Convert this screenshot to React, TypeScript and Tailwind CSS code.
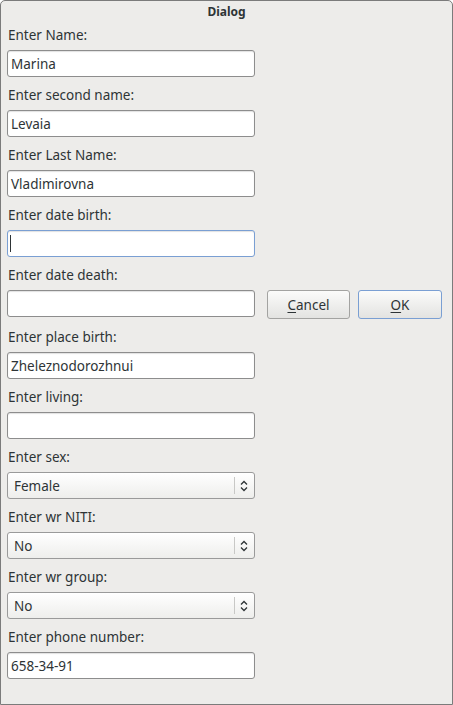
import React from "react";

const font = { fontFamily: '"Noto Sans", "DejaVu Sans", sans-serif' };

type Field = {
  label: string;
  value?: string;
  kind?: "text" | "focus" | "select";
  buttons?: boolean;
};

const fields: Field[] = [
  { label: "Enter Name:", value: "Marina" },
  { label: "Enter second name:", value: "Levaia" },
  { label: "Enter Last Name:", value: "Vladimirovna" },
  { label: "Enter date birth:", kind: "focus" },
  { label: "Enter date death:", buttons: true },
  { label: "Enter place birth:", value: "Zheleznodorozhnui" },
  { label: "Enter living:" },
  { label: "Enter sex:", value: "Female", kind: "select" },
  { label: "Enter wr NITI:", value: "No", kind: "select" },
  { label: "Enter wr group:", value: "No", kind: "select" },
  { label: "Enter phone number:", value: "658-34-91" },
];

const Entry = ({ value, focus }: { value?: string; focus?: boolean }) => (
  <div
    className={`flex h-[27px] w-[248px] items-center rounded-[3px] border bg-white px-[3px] text-[13.5px] leading-[18px] text-[#2e3436] shadow-[inset_0_1px_1px_rgba(0,0,0,0.12)] ${
      focus ? "border-[#7a9fd3]" : "border-[#8d8d8d]"
    }`}
  >
    {focus && <span className="ml-[-1px] h-[17px] w-px bg-[#2e3436]" />}
    {value}
  </div>
);

const Combo = ({ value }: { value?: string }) => (
  <div className="flex h-[27px] w-[248px] items-center rounded-[3px] border border-[#9a9a9a] bg-gradient-to-b from-white to-[#eeeeec] pl-[6px] text-[13.5px] leading-[18px] text-[#2e3436]">
    <span className="flex-1">{value}</span>
    <span className="h-[17px] w-px bg-[#c8c8c6]" />
    <svg width="18" height="14" viewBox="0 0 18 14" className="mr-[1px]">
      <path
        d="M6 5.5 L9 2.5 L12 5.5 M6 8.5 L9 11.5 L12 8.5"
        fill="none"
        stroke="#2e3436"
        strokeWidth="1.3"
      />
    </svg>
  </div>
);

const Button = ({ label, hot, def }: { label: string; hot: string; def?: boolean }) => (
  <button
    className={`h-[29px] rounded-[3px] border bg-gradient-to-b from-[#fbfbfa] to-[#e3e3e1] text-[13.5px] leading-[18px] text-[#2e3436] ${
      def ? "w-[84px] border-[#7a9fd3]" : "w-[83px] border-[#a3a3a1]"
    }`}
  >
    <span className="underline underline-offset-2">{hot}</span>
    {label.slice(hot.length)}
  </button>
);

export default function App() {
  return (
    <div
      style={font}
      className="flex h-[705px] w-[453px] flex-col overflow-hidden rounded-t-[5px] border border-[#7b7b7b] bg-[#edecea]"
    >
      <div className="flex h-[24px] items-start justify-center pt-[3px] text-[12px] leading-[15px] font-bold text-[#2e3436]">
        Dialog
      </div>
      <div className="flex flex-col px-[6px]">
        {fields.map((f) => (
          <div key={f.label} className="flex flex-col pb-[8px]">
            <div className="flex h-[20px] items-center pl-[1px] text-[13.5px] leading-[20px] text-[#2e3436]">
              {f.label}
            </div>
            <div className="mt-[5px] flex items-start">
              {f.kind === "select" ? (
                <Combo value={f.value} />
              ) : (
                <Entry value={f.value} focus={f.kind === "focus"} />
              )}
              {f.buttons && (
                <div className="ml-[12px] flex gap-[8px]">
                  <Button label="Cancel" hot="C" />
                  <Button label="OK" hot="O" def />
                </div>
              )}
            </div>
          </div>
        ))}
      </div>
    </div>
  );
}
